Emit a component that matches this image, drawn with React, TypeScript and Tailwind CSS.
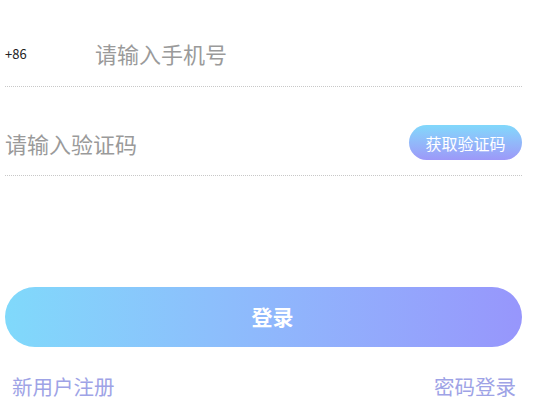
export default function App() {
  return (
    <div
      className="w-[545px] h-[401px] bg-white overflow-hidden pl-[5px] pr-[23px]"
      style={{ fontFamily: '"Noto Sans CJK SC", "Noto Sans", sans-serif' }}
    >
      {/* phone row */}
      <div className="mt-[21px] h-[66px] flex items-center border-b border-dotted border-[#c8c8c8]">
        <span className="w-[90px] text-[13px] text-[#222]">+86</span>
        <span className="text-[22px] text-[#9a9a9a]">请输入手机号</span>
      </div>

      {/* code row */}
      <div className="h-[89px] flex items-end justify-between pb-[15px] border-b border-dotted border-[#c8c8c8]">
        <span className="text-[22px] leading-[33px] text-[#9a9a9a]">请输入验证码</span>
        <button className="w-[113px] h-[35px] rounded-full bg-gradient-to-b from-[#80d8fb] to-[#9c98f8] text-white text-[16px] flex items-center justify-center">
          获取验证码
        </button>
      </div>

      {/* submit */}
      <button className="mt-[111px] w-full h-[60px] rounded-full bg-gradient-to-r from-[#80d9fb] to-[#9796fc] pl-[18px] text-white text-[21px] font-bold flex items-center justify-center">
        登录
      </button>

      <div className="mt-[27px] flex justify-between pl-[7px] pr-[6px] text-[20.5px] leading-[24px] text-[#9ea3e6]">
        <span>新用户注册</span>
        <span>密码登录</span>
      </div>
    </div>
  );
}
